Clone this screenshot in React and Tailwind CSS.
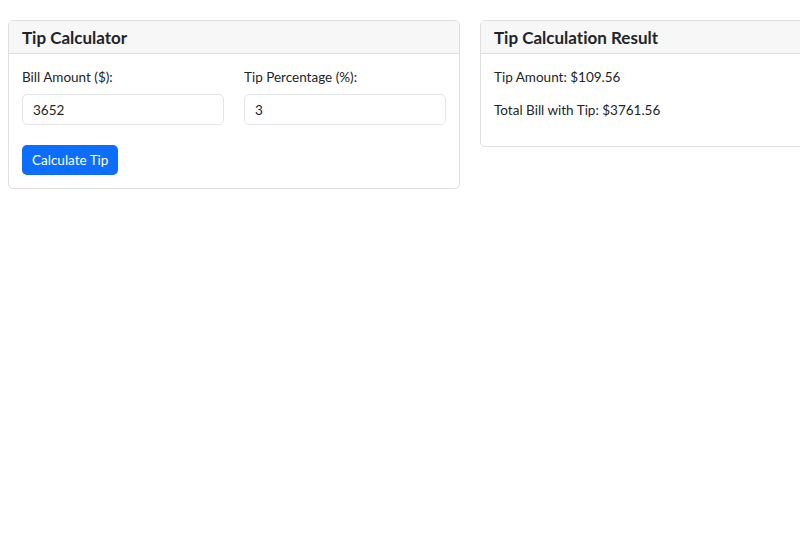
import React, { useState } from 'react';

export default function App() {
    const [bill, setBill] = useState('3652');
    const [pct, setPct] = useState('3');

    return (
        <div className="w-[800px] h-[550px] overflow-hidden bg-white text-[#212529] text-[13.5px] leading-[21px] [font-variant-ligatures:none]" style={{ fontFamily: 'Lato, "Noto Sans", sans-serif' }}>
            <div className="flex gap-5 pt-5 pl-2">
                {/* calculator card */}
                <div className="w-[452px] shrink-0 self-start border border-[#dfdfdf] rounded-[5px] overflow-hidden">
                    <div className="bg-[#f7f7f7] border-b border-[#dfdfdf] px-[13px] pt-[6px] pb-[5px]">
                        <h5 className="text-[17px] leading-[21px] font-bold">Tip Calculator</h5>
                    </div>
                    <div className="p-[13px]">
                        <div className="grid grid-cols-2 gap-5">
                            <div>
                                <label className="block mb-[6px]">Bill Amount ($):</label>
                                <input
                                    type="text"
                                    value={bill}
                                    onChange={(e) => setBill(e.target.value)}
                                    className="w-full h-[31px] px-[10px] border border-[#e3e5e8] rounded-[5px] outline-none"
                                />
                            </div>
                            <div>
                                <label className="block mb-[6px]">Tip Percentage (%):</label>
                                <input
                                    type="text"
                                    value={pct}
                                    onChange={(e) => setPct(e.target.value)}
                                    className="w-full h-[31px] px-[10px] border border-[#e3e5e8] rounded-[5px] outline-none"
                                />
                            </div>
                        </div>
                        <button className="mt-5 h-[30px] px-[10px] bg-[#0d6efd] text-white rounded-[5px]">
                            Calculate Tip
                        </button>
                    </div>
                </div>

                {/* result card */}
                <div className="w-[452px] shrink-0 self-start border border-[#dfdfdf] rounded-[5px] overflow-hidden">
                    <div className="bg-[#f7f7f7] border-b border-[#dfdfdf] px-[13px] pt-[6px] pb-[5px]">
                        <h5 className="text-[17px] leading-[21px] font-bold">Tip Calculation Result</h5>
                    </div>
                    <div className="px-[13px] pt-[13px] pb-[25px]">
                        <p className="mb-3">Tip Amount: $109.56</p>
                        <p>Total Bill with Tip: $3761.56</p>
                    </div>
                </div>
            </div>
        </div>
    );
}
